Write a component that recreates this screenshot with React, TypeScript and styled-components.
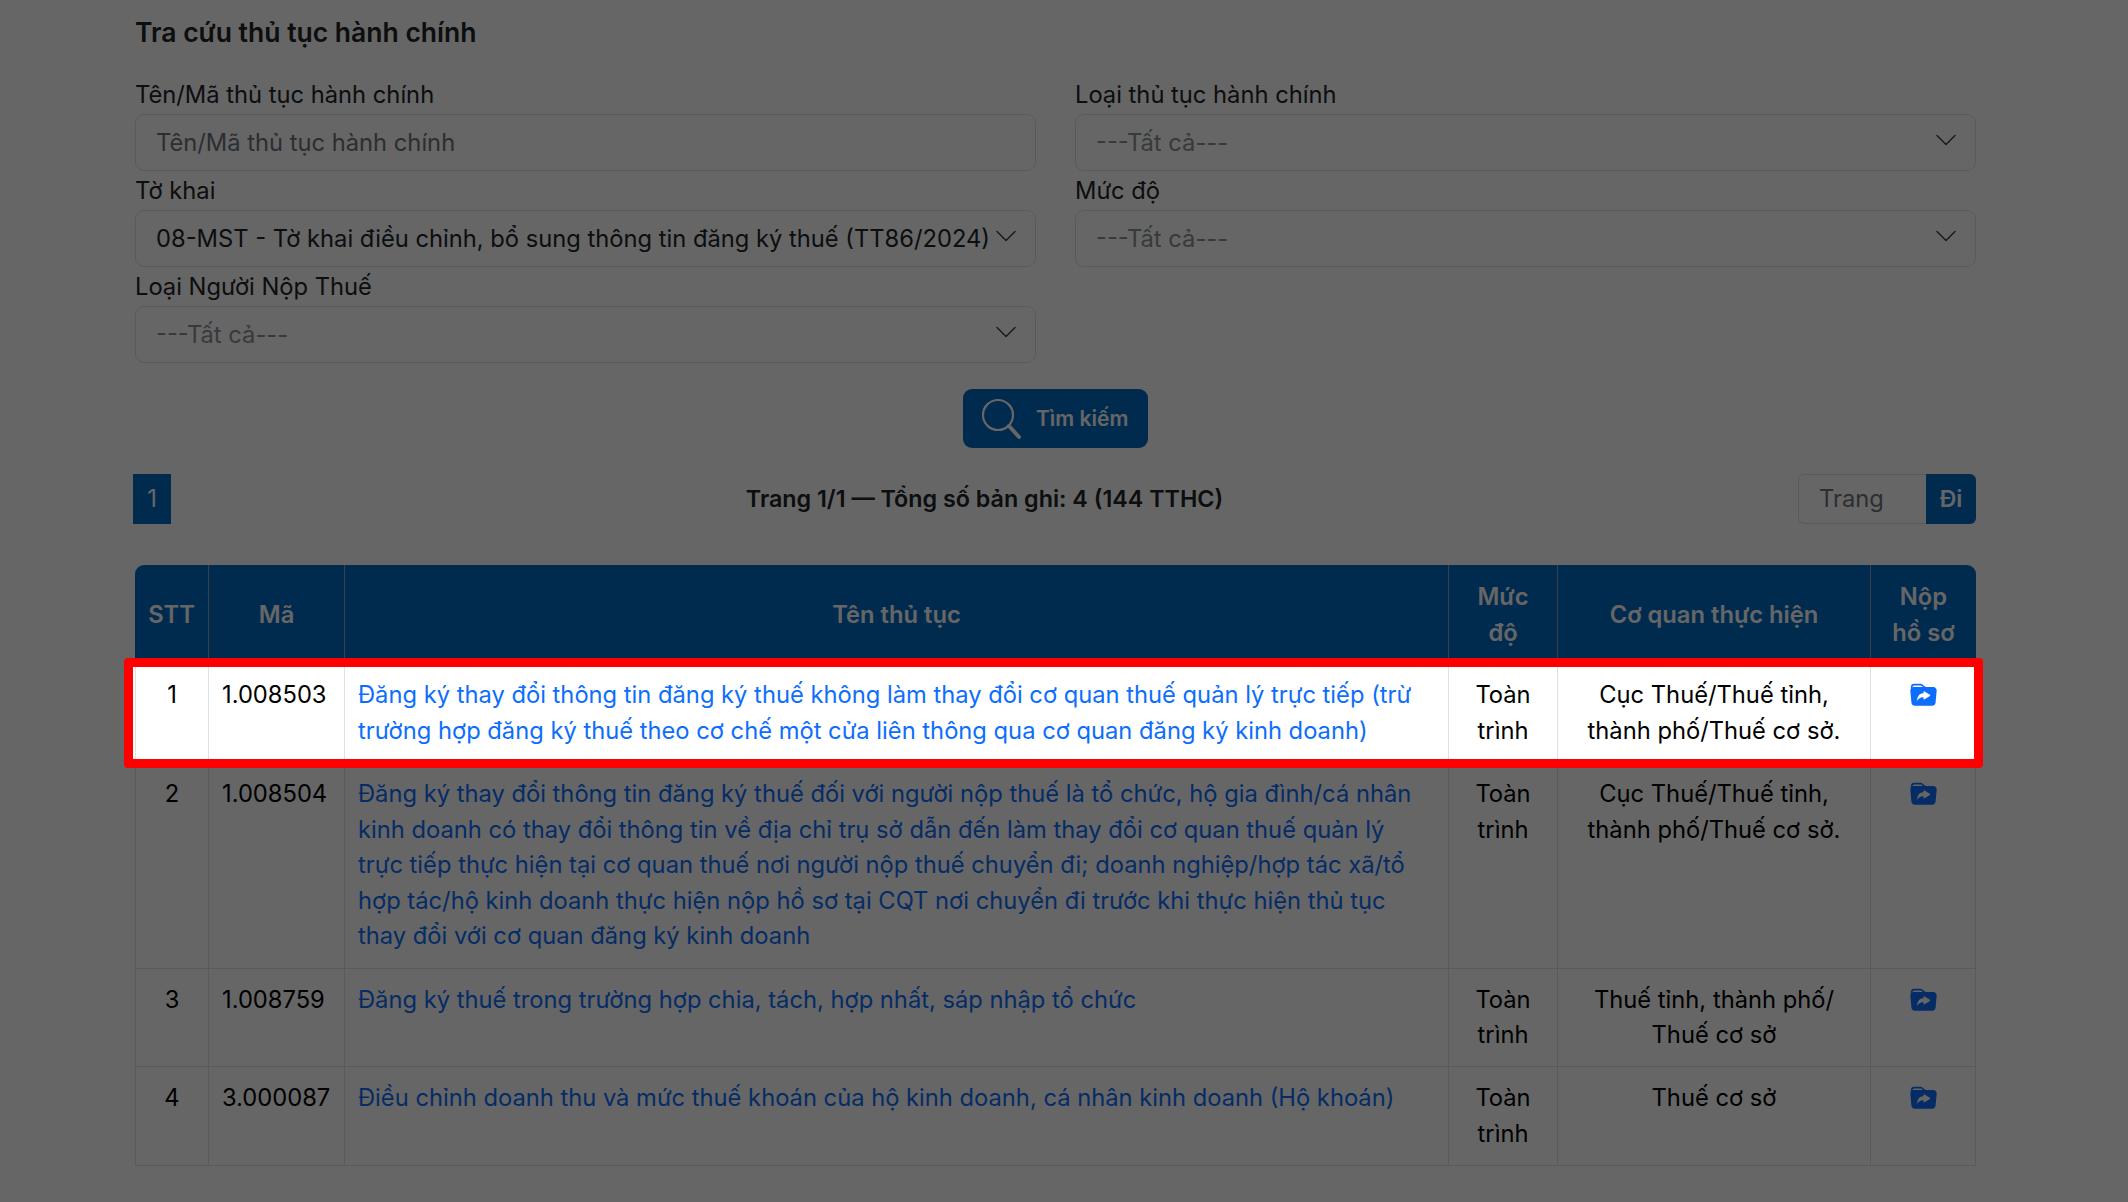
import { BsFolderSymlinkFill } from "react-icons/bs";
import styled, { createGlobalStyle } from "styled-components";

const GlobalStyle = createGlobalStyle`
  html, body {
    margin: 0;
    padding: 0;
    height: 100%;
    overflow: hidden;
    background: #fff;
    color: #212529;
    font-family: Inter, "Liberation Sans", sans-serif;
    font-size: 23.72px;
    line-height: 1.5;
  }
`;

const Page = styled.div`
  box-sizing: border-box;
  height: 1202px;
  padding: 13px 152px 0 135px;
`;

const Overlay = styled.div`
  position: fixed;
  inset: 0;
  z-index: 10;
  background: rgba(0, 0, 0, 0.6);
`;

const Title = styled.h1`
  margin: 0 0 26px;
  font-size: 26.5px;
  line-height: 38px;
  font-weight: 600;
`;

const FormGrid = styled.div`
  display: grid;
  grid-template-columns: 901px 901px;
  column-gap: 39px;
  align-items: start;
`;

const Field = styled.div`
  height: 96px;
`;

const Label = styled.label`
  display: block;
  height: 37px;
  line-height: 36px;
`;

const Input = styled.input`
  box-sizing: border-box;
  display: block;
  width: 100%;
  height: 57px;
  padding: 0 20px;
  border: 1.5px solid #dee2e6;
  border-radius: 9px;
  background: #fff;
  font: inherit;
  color: #212529;
  &::placeholder {
    color: #6c757d;
  }
`;

const Select = styled.div`
  box-sizing: border-box;
  display: flex;
  align-items: center;
  justify-content: space-between;
  height: 57px;
  padding: 0 20px;
  border: 1.5px solid #dee2e6;
  border-radius: 9px;
  background: #fff;
`;

const SelectText = styled.span<{ $muted?: boolean }>`
  white-space: nowrap;
  color: ${(p) => (p.$muted ? "#8a9198" : "#212529")};
`;

const Chevron = styled.svg`
  flex: none;
  width: 24px;
  height: 24px;
  margin-top: -5px;
  margin-right: -3px;
  fill: none;
  stroke: #343a40;
  stroke-width: 0.9;
  stroke-linecap: round;
  stroke-linejoin: round;
`;

const ButtonRow = styled.div`
  display: flex;
  justify-content: center;
  padding-top: 24px;
`;

const SearchButton = styled.button`
  display: flex;
  align-items: center;
  gap: 13px;
  box-sizing: border-box;
  width: 185px;
  height: 59px;
  padding: 0 0 0 18px;
  border: 0;
  border-radius: 9px;
  background: #006bc5;
  color: #fff;
  font: 600 21px/1 Inter, sans-serif;
`;

const Pager = styled.div`
  display: flex;
  align-items: center;
  justify-content: space-between;
  height: 50px;
  margin: 26px 0 41px -2px;
`;

const PageNumber = styled.span`
  display: flex;
  align-items: center;
  justify-content: center;
  width: 38px;
  height: 50px;
  background: #006bc5;
  color: #fff;
`;

const PagerInfo = styled.span`
  font-size: 23.3px;
  font-weight: 600;
`;

const GoTo = styled.div`
  display: flex;
  width: 178px;
  height: 50px;
`;

const GoInput = styled.input`
  box-sizing: border-box;
  flex: 1;
  min-width: 0;
  padding: 0 20px;
  border: 1.5px solid #dee2e6;
  border-right: 0;
  border-radius: 6px 0 0 6px;
  font: inherit;
  &::placeholder {
    color: #6c757d;
  }
`;

const GoButton = styled.button`
  width: 50px;
  padding: 0;
  border: 0;
  border-radius: 0 6px 6px 0;
  background: #006bc5;
  color: #fff;
  font: 600 23px/1 Inter, sans-serif;
`;

const Table = styled.table`
  width: 1841px;
  table-layout: fixed;
  border-collapse: separate;
  border-spacing: 0;
`;

const Th = styled.th<{ $width: number }>`
  box-sizing: border-box;
  width: ${(p) => p.$width}px;
  padding: 14px 13px;
  background: #006bc5;
  color: #fff;
  font-weight: 600;
  text-align: center;
  border-left: 1.5px solid #8fa3b5;
  &:first-child {
    border-left: 0;
    border-top-left-radius: 9px;
  }
  &:last-child {
    border-top-right-radius: 9px;
  }
`;

const Row = styled.tr<{ $active?: boolean }>`
  ${(p) =>
    p.$active
      ? `
    position: relative;
    z-index: 11;
    background: #fff;
    &::after {
      content: "";
      position: absolute;
      top: -6px;
      left: -11px;
      right: -7px;
      bottom: -5px;
      border: 9px solid #ff0000;
      border-radius: 4px;
      box-shadow: inset 2px 0 0 #fff;
      pointer-events: none;
    }
  `
      : ""}
`;

const Td = styled.td<{ $align?: string }>`
  box-sizing: border-box;
  padding: 13px 13px 13.7px;
  vertical-align: top;
  color: #000;
  text-align: ${(p) => p.$align ?? "left"};
  border-left: 1.5px solid #dee2e6;
  border-bottom: 1.5px solid #dee2e6;
  &:last-child {
    border-right: 1.5px solid #dee2e6;
  }
`;

const ProcedureLink = styled.a`
  color: #0d6efd;
  text-decoration: none;
`;

const SubmitIcon = styled(BsFolderSymlinkFill)`
  display: block;
  width: 27px;
  height: 27px;
  margin: 5px auto 0;
  color: #0d6efd;
`;

const columns = [
  { title: "STT", width: 73 },
  { title: "Mã", width: 136 },
  { title: "Tên thủ tục", width: 1104 },
  { title: "Mức độ", width: 109 },
  { title: "Cơ quan thực hiện", width: 313 },
  { title: "Nộp hồ sơ", width: 106 },
];

const rows = [
  {
    stt: 1,
    code: "1.008503",
    name: "Đăng ký thay đổi thông tin đăng ký thuế không làm thay đổi cơ quan thuế quản lý trực tiếp (trừ trường hợp đăng ký thuế theo cơ chế một cửa liên thông qua cơ quan đăng ký kinh doanh)",
    agency: "Cục Thuế/Thuế tỉnh, thành phố/Thuế cơ sở.",
    active: true,
  },
  {
    stt: 2,
    code: "1.008504",
    name: "Đăng ký thay đổi thông tin đăng ký thuế đối với người nộp thuế là tổ chức, hộ gia đình/cá nhân kinh doanh có thay đổi thông tin về địa chỉ trụ sở dẫn đến làm thay đổi cơ quan thuế quản lý trực tiếp thực hiện tại cơ quan thuế nơi người nộp thuế chuyển đi; doanh nghiệp/hợp tác xã/tổ hợp tác/hộ kinh doanh thực hiện nộp hồ sơ tại CQT nơi chuyển đi trước khi thực hiện thủ tục thay đổi với cơ quan đăng ký kinh doanh",
    agency: "Cục Thuế/Thuế tỉnh, thành phố/Thuế cơ sở.",
  },
  {
    stt: 3,
    code: "1.008759",
    name: "Đăng ký thuế trong trường hợp chia, tách, hợp nhất, sáp nhập tổ chức",
    agency: "Thuế tỉnh, thành phố/ Thuế cơ sở",
  },
  {
    stt: 4,
    code: "3.000087",
    name: "Điều chỉnh doanh thu và mức thuế khoán của hộ kinh doanh, cá nhân kinh doanh (Hộ khoán)",
    agency: "Thuế cơ sở",
  },
];

function ChevronIcon() {
  return (
    <Chevron viewBox="0 0 16 16">
      <path d="m2 5 6 6 6-6" />
    </Chevron>
  );
}

function App() {
  return (
    <Page>
      <GlobalStyle />
      <Overlay />
      <Title>Tra cứu thủ tục hành chính</Title>
      <FormGrid>
        <Field>
          <Label>Tên/Mã thủ tục hành chính</Label>
          <Input placeholder="Tên/Mã thủ tục hành chính" />
        </Field>
        <Field>
          <Label>Loại thủ tục hành chính</Label>
          <Select>
            <SelectText $muted>---Tất cả---</SelectText>
            <ChevronIcon />
          </Select>
        </Field>
        <Field>
          <Label>Tờ khai</Label>
          <Select>
            <SelectText>
              08-MST - Tờ khai điều chỉnh, bổ sung thông tin đăng ký thuế (TT86/2024)
            </SelectText>
            <ChevronIcon />
          </Select>
        </Field>
        <Field>
          <Label>Mức độ</Label>
          <Select>
            <SelectText $muted>---Tất cả---</SelectText>
            <ChevronIcon />
          </Select>
        </Field>
        <Field>
          <Label>Loại Người Nộp Thuế</Label>
          <Select>
            <SelectText $muted>---Tất cả---</SelectText>
            <ChevronIcon />
          </Select>
        </Field>
      </FormGrid>
      <ButtonRow>
        <SearchButton>
          <svg width="42" height="42" viewBox="0 0 42 42" fill="none" stroke="currentColor">
            <circle cx="17" cy="17" r="15" strokeWidth="2.2" />
            <path d="M28 28 38 39" strokeWidth="4" strokeLinecap="round" />
          </svg>
          Tìm kiếm
        </SearchButton>
      </ButtonRow>
      <Pager>
        <PageNumber>1</PageNumber>
        <PagerInfo>Trang 1/1 — Tổng số bản ghi: 4 (144 TTHC)</PagerInfo>
        <GoTo>
          <GoInput placeholder="Trang" />
          <GoButton>Đi</GoButton>
        </GoTo>
      </Pager>
      <Table>
        <thead>
          <tr>
            {columns.map((col) => (
              <Th key={col.title} $width={col.width}>
                {col.title}
              </Th>
            ))}
          </tr>
        </thead>
        <tbody>
          {rows.map((row) => (
            <Row key={row.stt} $active={row.active}>
              <Td $align="center">{row.stt}</Td>
              <Td>{row.code}</Td>
              <Td>
                <ProcedureLink>{row.name}</ProcedureLink>
              </Td>
              <Td $align="center">Toàn trình</Td>
              <Td $align="center">{row.agency}</Td>
              <Td $align="center">
                <SubmitIcon />
              </Td>
            </Row>
          ))}
        </tbody>
      </Table>
    </Page>
  );
}

export default App;
